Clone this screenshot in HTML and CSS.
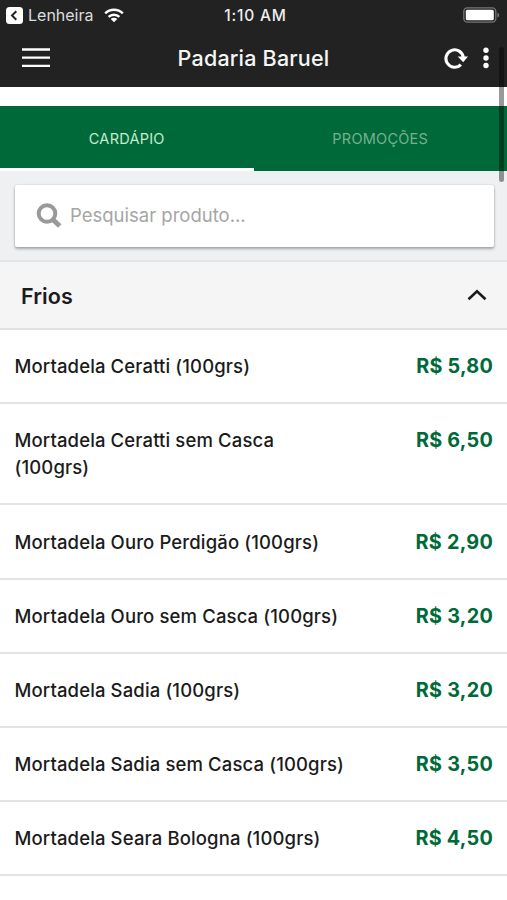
FILE: index.html
```html
<!DOCTYPE html>
<html lang="pt-BR">
<head>
<meta charset="utf-8">
<title>Padaria Baruel</title>
<link rel="stylesheet" href="styles.css">
</head>
<body>
<header class="top">
  <div class="status">
    <div class="status-left">
      <svg class="back" width="17" height="17" viewBox="0 0 17 17"><rect width="17" height="17" rx="3.5" fill="#fff"/><path d="M10.3 4.2 6 8.500l4.300 4.300" fill="none" stroke="#222" stroke-width="2"/></svg>
      <span class="back-label">Lenheira</span>
      <svg class="wifi" width="20" height="15" viewBox="0 0 20 15"><g fill="none" stroke="#fff" stroke-width="2.4"><path d="M1.2 5.4a12.6 12.6 0 0 1 17.6 0"/><path d="M4.6 8.9a7.8 7.8 0 0 1 10.8 0"/></g><path d="M10 14.2 6.7 11a4.7 4.7 0 0 1 6.6 0z" fill="#fff"/></svg>
    </div>
    <span class="clock">1:10 AM</span>
    <svg class="battery" width="37" height="16" viewBox="0 0 37 16"><rect x=".8" y=".8" width="32" height="14.4" rx="3.6" fill="none" stroke="#777" stroke-width="1.3"/><rect x="2.8" y="2.8" width="28" height="10.4" rx="1.5" fill="#fff"/><path d="M34.4 5.4c2.3 1 2.3 4.200 0 5.200z" fill="#777"/></svg>
  </div>
  <div class="bar">
    <svg class="menu" width="28" height="20" viewBox="0 0 28 20"><path d="M0 1.500h28M0 9.700h28M0 17.900h28" stroke="#fff" stroke-width="2.300"/></svg>
    <h1 class="title">Padaria Baruel</h1>
    <div class="actions">
      <svg width="24" height="22" viewBox="0 0 24 22"><path d="M16.900 17.600A8.700 8.700 0 1 1 19.300 10.500" fill="none" stroke="#fff" stroke-width="3.100"/><path d="M13.700 9.400h10.300L19.200 15.200z" fill="#fff"/></svg>
      <svg width="6" height="22" viewBox="0 0 6 22"><g fill="#fff"><circle cx="3" cy="3.300" r="2.700"/><circle cx="3" cy="11" r="2.700"/><circle cx="3" cy="18.500" r="2.700"/></g></svg>
    </div>
  </div>
</header>
<nav class="tabs">
  <div class="tab active"><span class="tab-label">CARDÁPIO</span></div>
  <div class="tab"><span class="tab-label">PROMOÇÕES</span></div>
</nav>
<div class="search">
  <div class="field">
    <svg width="26" height="26" viewBox="0 0 26 26"><circle cx="11" cy="10.500" r="8.300" fill="none" stroke="#999" stroke-width="4"/><path d="m17.100 16.800 6.600 6.200" stroke="#999" stroke-width="5"/></svg>
    <span class="placeholder">Pesquisar produto...</span>
  </div>
</div>
<section>
  <div class="group">
    <h2 class="group-title">Frios</h2>
    <svg width="20" height="12" viewBox="0 0 20 12"><path d="m1.500 10.300 8.500-8 8.500 8" fill="none" stroke="#1b1b1b" stroke-width="2.600"/></svg>
  </div>
  <ul class="items">
    <li class="item"><span class="name">Mortadela Ceratti (100grs)</span><span class="price">R$ 5,80</span></li>
    <li class="item"><span class="name">Mortadela Ceratti sem Casca<br>(100grs)</span><span class="price">R$ 6,50</span></li>
    <li class="item"><span class="name">Mortadela Ouro Perdigão (100grs)</span><span class="price">R$ 2,90</span></li>
    <li class="item"><span class="name">Mortadela Ouro sem Casca (100grs)</span><span class="price">R$ 3,20</span></li>
    <li class="item"><span class="name">Mortadela Sadia (100grs)</span><span class="price">R$ 3,20</span></li>
    <li class="item"><span class="name">Mortadela Sadia sem Casca (100grs)</span><span class="price">R$ 3,50</span></li>
    <li class="item"><span class="name">Mortadela Seara Bologna (100grs)</span><span class="price">R$ 4,50</span></li>
  </ul>
</section>
<div class="scrollbar"></div>
</body>
</html>
```
FILE: styles.css
```css
* { box-sizing: border-box; }
body {
  margin: 0;
  height: 900px;
  overflow: hidden;
  background: #fff;
  color: #1b1b1b;
  font-family: Inter, "Liberation Sans", sans-serif;
}
svg { display: block; flex: none; }
h1, h2, ul { margin: 0; padding: 0; }
.top { height: 87px; background: #222; color: #fff; }
.status {
  height: 30px;
  display: grid;
  grid-template-columns: 1fr auto 1fr;
  align-items: center;
  padding: 0 7px 0 6px;
}
.status-left { display: flex; align-items: center; }
.back-label { width: 64px; margin: 0 12px 0 5px; font-size: 16px; color: #ddd; white-space: nowrap; }
.clock { margin-left: 5px; font-size: 15.500px; font-weight: 500; color: #eee; letter-spacing: .8px; }
.battery { justify-self: end; }
.bar {
  height: 55px;
  display: grid;
  grid-template-columns: 1fr auto 1fr;
  align-items: center;
  padding: 0 18px 0 22px;
}
.title { margin-right: 4px; font-size: 21.500px; font-weight: 500; line-height: 26px; letter-spacing: .2px; color: #f5f5f5; }
.actions { display: flex; justify-content: flex-end; gap: 15px; }
.tabs {
  margin-top: 19px;
  height: 65px;
  display: grid;
  grid-template-columns: 1fr 1fr;
  background: #006939;
}
.tab { display: flex; justify-content: center; align-items: center; border-bottom: 3px solid #006939; color: #75b18f; }
.tab.active { border-color: #fff; color: #c6e9d0; }
.tab-label { font-size: 14.500px; letter-spacing: .25px; padding-top: 3px; }
.search { height: 89px; padding: 14px 13px 0 15px; background: #eef0f2; }
.field {
  height: 62px;
  display: flex;
  align-items: center;
  gap: 8px;
  padding-left: 21px;
  background: #fff;
  border-radius: 2px;
  box-shadow: 0 2px 3px rgba(0, 0, 0, .3), 0 0 2px rgba(0, 0, 0, .15);
}
.placeholder { padding-bottom: 3px; font-size: 18.500px; color: #a5a5a5; }
.group {
  height: 70px;
  display: flex;
  align-items: center;
  justify-content: space-between;
  padding: 0 20px 0 21px;
  background: #f5f5f5;
  border-top: 2px solid #e4e5e6;
  border-bottom: 2px solid #e2e2e2;
}
.group-title { padding-top: 1px; font-size: 21.500px; font-weight: 600; line-height: 26px; letter-spacing: .1px; }
.items { list-style: none; }
.item {
  display: flex;
  justify-content: space-between;
  padding: 23.200px 14px 22px 14.500px;
  border-bottom: 2px solid #e4e4e4;
  line-height: 27px;
}
.name { font-size: 18.500px; font-weight: 500; letter-spacing: .13px; white-space: nowrap; }
.price { font-size: 19.800px; font-weight: 700; letter-spacing: .25px; color: #006939; white-space: nowrap; }
.scrollbar {
  position: absolute;
  top: 47px;
  right: 3px;
  width: 5px;
  height: 135px;
  border-radius: 3px;
  background: rgba(0, 0, 0, .4);
}
```
